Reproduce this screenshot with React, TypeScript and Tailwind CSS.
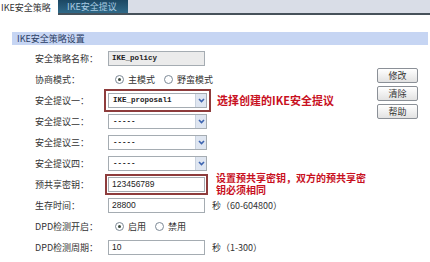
import React from "react";

function Chevron() {
  return (
    <svg width="7" height="5" viewBox="0 0 7 5">
      <path d="M1 1 L3.5 3.5 L6 1" fill="none" stroke="#3d64b0" strokeWidth="1.6" />
    </svg>
  );
}

function SelectBox({ value, boxed = false }: { value: string; boxed?: boolean }) {
  return (
    <div
      className={`w-[99px] h-[15px] border border-[#a5acb2] bg-white flex items-center ${
        boxed ? "outline-solid outline-2 outline-[#8e3c3c] outline-offset-[2px]" : ""
      }`}
    >
      <span className="flex-1 pl-[4px] font-['Liberation_Mono',monospace] text-[7.5px] font-bold text-[#222] leading-none">
        {value}
      </span>
      <span className="w-[11px] h-full bg-[#dfe6f1] border-l border-[#c9d2de] flex items-center justify-center">
        <Chevron />
      </span>
    </div>
  );
}

function TextInput({
  value,
  gray = false,
  mono = false,
  boxed = false,
}: {
  value: string;
  gray?: boolean;
  mono?: boolean;
  boxed?: boolean;
}) {
  return (
    <div
      className={`w-[97px] h-[15px] border border-[#a5acb2] px-[3px] flex items-center ${
        gray ? "bg-[#ebebeb]" : "bg-white"
      } ${boxed ? "outline-solid outline-2 outline-[#8e3c3c] outline-offset-[1px]" : ""}`}
    >
      <span
        className={`leading-none text-[#222] ${
          mono
            ? "font-['Liberation_Mono',monospace] text-[7.5px] font-bold"
            : "font-['Liberation_Sans',sans-serif] text-[8.5px]"
        }`}
      >
        {value}
      </span>
    </div>
  );
}

function Radio({ checked }: { checked?: boolean }) {
  return (
    <span className="w-[9px] h-[9px] rounded-full border border-[#7c8996] bg-white flex items-center justify-center shrink-0">
      {checked && <span className="w-[3px] h-[3px] rounded-full bg-[#3c4a3c]" />}
    </span>
  );
}

function Row({ label, children }: { label: string; children: React.ReactNode }) {
  return (
    <div className="flex items-center h-[21px]">
      <div className="w-[108px] pl-[35px] shrink-0">{label}</div>
      {children}
    </div>
  );
}

function Btn({ text }: { text: string }) {
  return (
    <div className="h-[15px] border border-[#8b9097] rounded-[2px] bg-linear-to-b from-white to-[#e2e2e2] flex items-center justify-center text-[9px] text-[#333]">
      {text}
    </div>
  );
}

export default function App() {
  return (
    <div className="w-[430px] h-[262px] bg-white overflow-hidden text-[9px] text-[#333] font-['Noto_Sans_CJK_SC',sans-serif] leading-none">
      {/* tabs */}
      <div className="flex h-[15px]">
        <div className="w-[58px] h-[15px] bg-white flex items-center pl-[1px] text-[#333]">IKE安全策略</div>
        <div className="w-[70px] h-[15px] border-b-2 border-[#46515a] bg-linear-to-b from-[#1c4763] to-[#2f6988] flex items-center pl-[9px] text-[#a9cbe2]">
          IKE安全提议
        </div>
        <div className="flex-1 h-[15px] bg-[#d9dde7] border-b-2 border-[#46515a]" />
      </div>

      {/* section header */}
      <div className="mt-[17px] ml-[12px] mr-[2px] h-[13px] bg-[#c6d5f3] flex items-center pl-[5px] text-[#2b3d63]">
        IKE安全策略设置
      </div>

      <div className="flex mt-[3px]">
        <div className="flex-1">
          <Row label="安全策略名称：">
            <TextInput value="IKE_policy" gray mono />
          </Row>
          <Row label="协商模式：">
            <div className="flex items-center pl-[7px]">
              <Radio checked />
              <span className="ml-[4px]">主模式</span>
              <span className="ml-[9px]">
                <Radio />
              </span>
              <span className="ml-[4px]">野蛮模式</span>
            </div>
          </Row>
          <Row label="安全提议一：">
            <SelectBox value="IKE_proposal1" boxed />
            <span className="ml-[10px] text-[11px] font-bold text-[#c8101e]">选择创建的IKE安全提议</span>
          </Row>
          <Row label="安全提议二：">
            <SelectBox value="-----" />
          </Row>
          <Row label="安全提议三：">
            <SelectBox value="-----" />
          </Row>
          <Row label="安全提议四：">
            <SelectBox value="-----" />
          </Row>
          <Row label="预共享密钥：">
            <TextInput value="123456789" boxed />
            <span className="ml-[11px] font-['Liberation_Sans','Noto_Sans_CJK_SC',sans-serif] text-[10px] leading-[11.5px] font-bold text-[#c8101e]">
              设置预共享密钥，双方的预共享密
              <br />
              钥必须相同
            </span>
          </Row>
          <Row label="生存时间：">
            <TextInput value="28800" />
            <span className="ml-[7px]">秒（60-604800）</span>
          </Row>
          <Row label="DPD检测开启：">
            <div className="flex items-center pl-[7px]">
              <Radio checked />
              <span className="ml-[4px]">启用</span>
              <span className="ml-[9px]">
                <Radio />
              </span>
              <span className="ml-[4px]">禁用</span>
            </div>
          </Row>
          <Row label="DPD检测周期：">
            <TextInput value="10" />
            <span className="ml-[7px]">秒（1-300）</span>
          </Row>
        </div>

        <div className="w-[41px] mr-[12px] mt-[20px] flex flex-col gap-[3px]">
          <Btn text="修改" />
          <Btn text="清除" />
          <Btn text="帮助" />
        </div>
      </div>
    </div>
  );
}
